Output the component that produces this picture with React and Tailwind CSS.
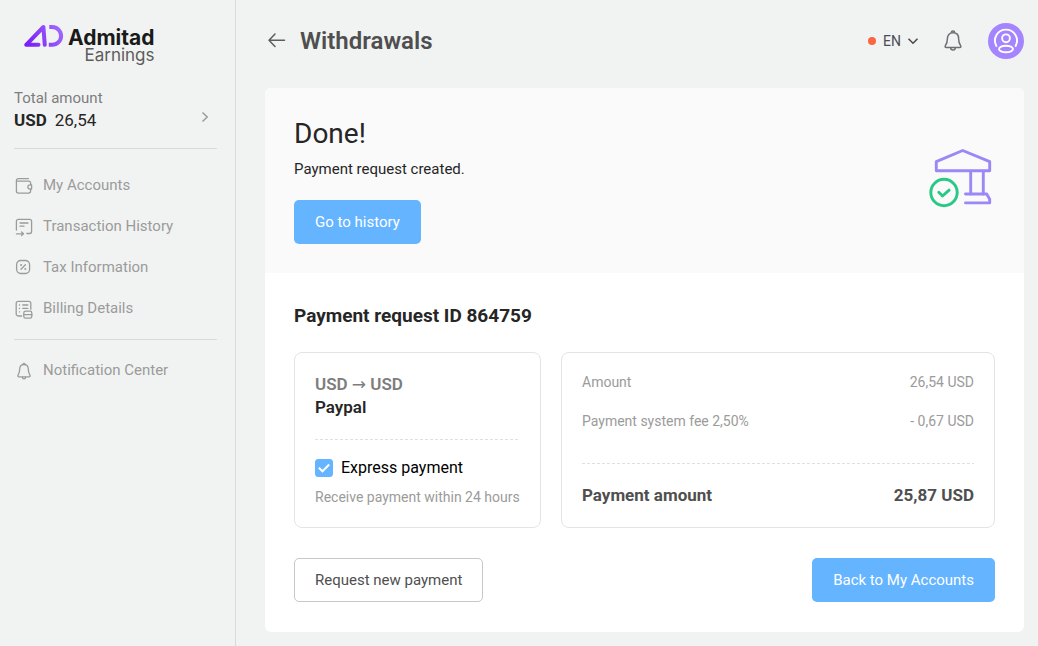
import React, { useState } from "react";

const Icon = ({ children, className = "h-[21px] w-[21px] shrink-0" }) => (
  <svg
    viewBox="0 0 21 21"
    className={className}
    fill="none"
    stroke="currentColor"
    strokeWidth="1.3"
    strokeLinecap="round"
    strokeLinejoin="round"
    aria-hidden="true"
  >
    {children}
  </svg>
);

const WalletIcon = () => (
  <Icon>
    <path d="M14.5 3.6H4.4a2 2 0 0 0-2 2v10.5a2 2 0 0 0 2 2h10.2a2 2 0 0 0 2-2v-2M2.4 6.2h12.2a2 2 0 0 1 2 2v1.6" />
    <path d="M17.6 9.9h-1.6a2.1 2.1 0 0 0 0 4.2h1.6z" />
  </Icon>
);

const HistoryIcon = () => (
  <Icon>
    <path d="M2.4 14V5.3a2 2 0 0 1 2-2h11.2a2 2 0 0 1 2 2v10.2a2 2 0 0 1-2 2h-2.8" />
    <path d="M6 7h8M6 10.2h4M2.4 17.8h6.8M7.6 16l1.9 1.8-1.9 1.8" />
  </Icon>
);

const TaxIcon = () => (
  <Icon>
    <rect x="2.6" y="3.5" width="13" height="13" rx="4.2" />
    <path d="M7 12.2l4.4-4.4" />
    <circle cx="7.1" cy="8.1" r="0.4" />
    <circle cx="11.3" cy="12" r="0.4" />
  </Icon>
);

const BillingIcon = () => (
  <Icon>
    <path d="M7.6 18H4.2a2 2 0 0 1-2-2V5.3a2 2 0 0 1 2-2h10.6a2 2 0 0 1 2 2v6" />
    <path d="M5.4 7h.2M8.8 7h5M5.4 10.4h.2M8.8 10.4h5M5.4 13.8h.2" />
    <rect x="9.8" y="13.2" width="8" height="7" rx="1.8" />
    <path d="M9.8 16.7h8" />
  </Icon>
);

const BellIcon = () => (
  <Icon>
    <path d="M10 4.6c-2.8 0-4.3 2-4.3 4.5 0 3-.5 4.2-1.5 5.7-.7 1.1-.3 2 .8 2h10c1.1 0 1.5-.9.8-2-1-1.5-1.5-2.7-1.5-5.7 0-2.5-1.5-4.5-4.3-4.5z" />
    <path d="M8.9 4.6a1.1 1.1 0 0 1 2.2 0M8.4 17.2a1.6 1.6 0 0 0 3.2 0" />
  </Icon>
);

const Logo = () => (
  <div className="flex gap-1 pl-[10px]">
    <svg viewBox="0 0 40 24" className="h-6 w-10 shrink-0" fill="none" aria-hidden="true">
      <defs>
        <linearGradient id="mark" x1="0" y1="24" x2="40" y2="0" gradientUnits="userSpaceOnUse">
          <stop offset="0" stopColor="#7416f5" />
          <stop offset="1" stopColor="#a672ff" />
        </linearGradient>
      </defs>
      <g stroke="url(#mark)" strokeWidth="4" strokeLinecap="round" strokeLinejoin="round">
        <path d="M14.5 20.8H2.2L19.4 3l1.4 17.8" />
        <path d="M25.3 3h2.9a8.900 8.900 0 0 1 0 17.800h-3.400" strokeLinecap="butt" />
      </g>
    </svg>
    <div className="text-right font-[Inter]">
      <div className="pt-[5px] text-[21px] leading-[18px] font-bold text-[#1a1a1a]">Admitad</div>
      <div className="text-[17px] leading-[17px] text-[#5c5c5c]">Earnings</div>
    </div>
  </div>
);

const navItems = [
  { label: "My Accounts", icon: <WalletIcon /> },
  { label: "Transaction History", icon: <HistoryIcon /> },
  { label: "Tax Information", icon: <TaxIcon /> },
  { label: "Billing Details", icon: <BillingIcon /> },
];

const NavLink = ({ label, icon }) => (
  <a href="#" className="flex h-[41px] items-center gap-2 text-[15px] text-[#9b9b9b]">
    {icon}
    <span className="whitespace-nowrap">{label}</span>
  </a>
);

const Sidebar = () => (
  <aside className="w-[236px] shrink-0 border-r border-[#d9dadc] pt-6 pr-[18px] pl-[14px]">
    <Logo />
    <a
      href="#"
      className="mt-[23px] flex items-end justify-between border-b border-[#d9dadc] pb-[17px]"
    >
      <span className="leading-[22px]">
        <span className="block text-[15px] text-[#7d7d7d]">Total amount</span>
        <span className="flex gap-2 text-[17px] leading-[22px] text-[#262626]">
          <b className="font-bold">USD</b>
          26,54
        </span>
      </span>
      <svg
        viewBox="0 0 10 12"
        className="mr-[7px] mb-2 h-3 w-[10px]"
        fill="none"
        stroke="#9b9b9b"
        strokeWidth="1.5"
        aria-hidden="true"
      >
        <path d="M2.5 1.5L7.2 6 2.5 10.5" />
      </svg>
    </a>
    <nav>
      <div className="border-b border-[#d9dade] pt-4 pb-[10px]">
        {navItems.map((item) => (
          <NavLink key={item.label} {...item} />
        ))}
      </div>
      <div className="pt-[10px]">
        <NavLink label="Notification Center" icon={<BellIcon />} />
      </div>
    </nav>
  </aside>
);

const Header = () => (
  <header className="flex items-center justify-between pt-[23px] pb-[29px]">
    <div className="flex items-center gap-[14px] pl-[2px]">
      <button type="button" aria-label="Back">
        <svg
          viewBox="0 0 19 16"
          className="h-4 w-[19px]"
          fill="none"
          stroke="#5b5e5c"
          strokeWidth="1.5"
          strokeLinecap="round"
          strokeLinejoin="round"
          aria-hidden="true"
        >
          <path d="M17.5 7.2H2M8 1L2 7.2 8 13.4" />
        </svg>
      </button>
      <h1 className="text-2xl font-semibold text-[#4f4f4f]">Withdrawals</h1>
    </div>
    <div className="flex items-center">
      <span className="mr-[7px] h-2 w-2 rounded-full bg-[#fb6542]" />
      <div className="relative">
        <select
          aria-label="Language"
          className="block w-9 appearance-none bg-transparent text-sm text-[#4a4d55]"
        >
          <option>EN</option>
        </select>
        <svg
          viewBox="0 0 12 8"
          className="pointer-events-none absolute top-[6px] right-0 h-2 w-3"
          fill="none"
          stroke="#4a4a4a"
          strokeWidth="1.6"
          aria-hidden="true"
        >
          <path d="M1.5 1.8L6 6.2l4.500-4.400" />
        </svg>
      </div>
      <button type="button" aria-label="Notifications" className="mr-[25px] ml-6">
        <svg
          viewBox="0 0 20 24"
          className="h-6 w-5"
          fill="none"
          stroke="#6d6f73"
          strokeWidth="1.5"
          strokeLinejoin="round"
          aria-hidden="true"
        >
          <path d="M10 3.8c-3.6 0-5.6 2.5-5.6 5.7 0 3.5-.6 5.1-2 7.1-.6 1-.3 1.9.9 1.9h13.4c1.2 0 1.5-.9.9-1.9-1.4-2-2-3.6-2-7.1 0-3.2-2-5.7-5.6-5.7z" />
          <path d="M8.3 3.8a1.7 1.7 0 1 1 3.4 0M7.7 18.7a2.3 2.3 0 0 0 4.6 0" />
        </svg>
      </button>
      <button type="button" aria-label="Profile" className="rounded-full bg-[#a584ff]">
        <svg
          viewBox="0 0 36 36"
          className="h-9 w-9"
          fill="none"
          stroke="#fff"
          strokeWidth="1.9"
          strokeLinecap="round"
          aria-hidden="true"
        >
          <path d="M8.4 23A11 11 0 1 1 27.6 23" />
          <circle cx="18" cy="15.3" r="3.9" />
          <ellipse cx="18" cy="26" rx="7" ry="3.2" />
        </svg>
      </button>
    </div>
  </header>
);

const BankIllustration = () => (
  <svg
    viewBox="0 0 66 65"
    className="h-[65px] w-[66px] shrink-0"
    fill="none"
    strokeWidth="2.9"
    strokeLinecap="round"
    strokeLinejoin="round"
    aria-hidden="true"
  >
    <g stroke="#9b87f5">
      <path d="M7.3 22.7v-9L33.7 2.5l27 11.2v9zM41.7 22.7V46M54.3 22.7V46" />
      <path d="M36.5 46h21.2l3 5.3v3.6H36.5" />
    </g>
    <g stroke="#27c985">
      <circle cx="15" cy="44.5" r="13.2" />
      <path d="M9.8 44.3l3.7 3.7 6.6-5.9" />
    </g>
  </svg>
);

const PrimaryButton = ({ children }) => (
  <button
    type="button"
    className="h-11 rounded-[5px] bg-[#64b4ff] px-[21px] text-[15px] whitespace-nowrap text-white"
  >
    {children}
  </button>
);

const Express = () => {
  const [express, setExpress] = useState(true);

  return (
    <div className="mt-4">
      <label className="flex items-center gap-2 text-base text-black">
        <span className="relative h-[18px] w-[18px]">
          <input
            type="checkbox"
            checked={express}
            onChange={(e) => setExpress(e.target.checked)}
            className="block h-[18px] w-[18px] appearance-none rounded-[3px] border border-[#64b4ff] bg-white checked:bg-[#64b4ff]"
          />
          {express && (
            <svg
              viewBox="0 0 18 18"
              className="pointer-events-none absolute inset-0"
              fill="none"
              stroke="#fff"
              strokeWidth="2"
              aria-hidden="true"
            >
              <path d="M3.8 8.7l3.7 3.6 6.700-6.800" />
            </svg>
          )}
        </span>
        Express payment
      </label>
      <p className="mt-[7px] text-sm whitespace-nowrap text-[#9b9b9b]">
        Receive payment within 24 hours
      </p>
    </div>
  );
};

const DashedLine = () => (
  <svg className="block h-px w-full" aria-hidden="true">
    <line x1="0" y1="0.5" x2="100%" y2="0.5" stroke="#e0e0e0" strokeDasharray="3 2" />
  </svg>
);

const App = () => {
  return (
    <div className="flex min-h-screen bg-[#f1f3f2] font-[Roboto,sans-serif]">
      <Sidebar />
      <main className="min-w-0 flex-1 pr-[14px] pb-[14px] pl-[29px]">
        <Header />
        <div className="overflow-hidden rounded-md bg-white">
          <section className="flex items-center justify-between bg-[#fafafa] p-[29px]">
            <div>
              <h2 className="text-[28px] leading-[34px] text-[#262626]">Done!</h2>
              <p className="mt-[7px] mb-5 text-[15px] leading-[22px] text-[#262626]">
                Payment request created.
              </p>
              <PrimaryButton>Go to history</PrimaryButton>
            </div>
            <BankIllustration />
          </section>

          <section className="px-[29px] pt-7 pb-[30px]">
            <h3 className="text-[19px] leading-[30px] font-bold text-[#262626]">
              Payment request ID 864759
            </h3>

            <div className="mt-[21px] flex gap-5">
              <div className="w-[247px] shrink-0 rounded-lg border border-[#e3e4e6] p-5">
                <p className="text-[17px] leading-[23px] font-semibold text-[#7d7d7d]">
                  USD <span className="font-['DejaVu_Sans'] font-normal">→</span> USD
                </p>
                <p className="mb-5 text-[17px] leading-[23px] font-semibold text-[#262626]">
                  Paypal
                </p>
                <DashedLine />
                <Express />
              </div>

              <dl className="flex-1 rounded-lg border border-[#e3e4e6] p-5 text-sm leading-[18px] text-[#9b9b9b]">
                <div className="flex justify-between">
                  <dt>Amount</dt>
                  <dd>26,54 USD</dd>
                </div>
                <div className="mt-[21px] mb-[33px] flex justify-between">
                  <dt>Payment system fee 2,50%</dt>
                  <dd>- 0,67 USD</dd>
                </div>
                <DashedLine />
                <div className="mt-5 flex justify-between text-[17px] leading-[23px] font-bold text-[#4f4f4f]">
                  <dt>Payment amount</dt>
                  <dd>25,87 USD</dd>
                </div>
              </dl>
            </div>

            <div className="mt-[30px] flex justify-between">
              <button
                type="button"
                className="h-11 rounded-[5px] border border-[#c8c8c8] bg-white px-5 text-[15px] text-[#4f4f4f]"
              >
                Request new payment
              </button>
              <PrimaryButton>Back to My Accounts</PrimaryButton>
            </div>
          </section>
        </div>
      </main>
    </div>
  );
};

export default App;
